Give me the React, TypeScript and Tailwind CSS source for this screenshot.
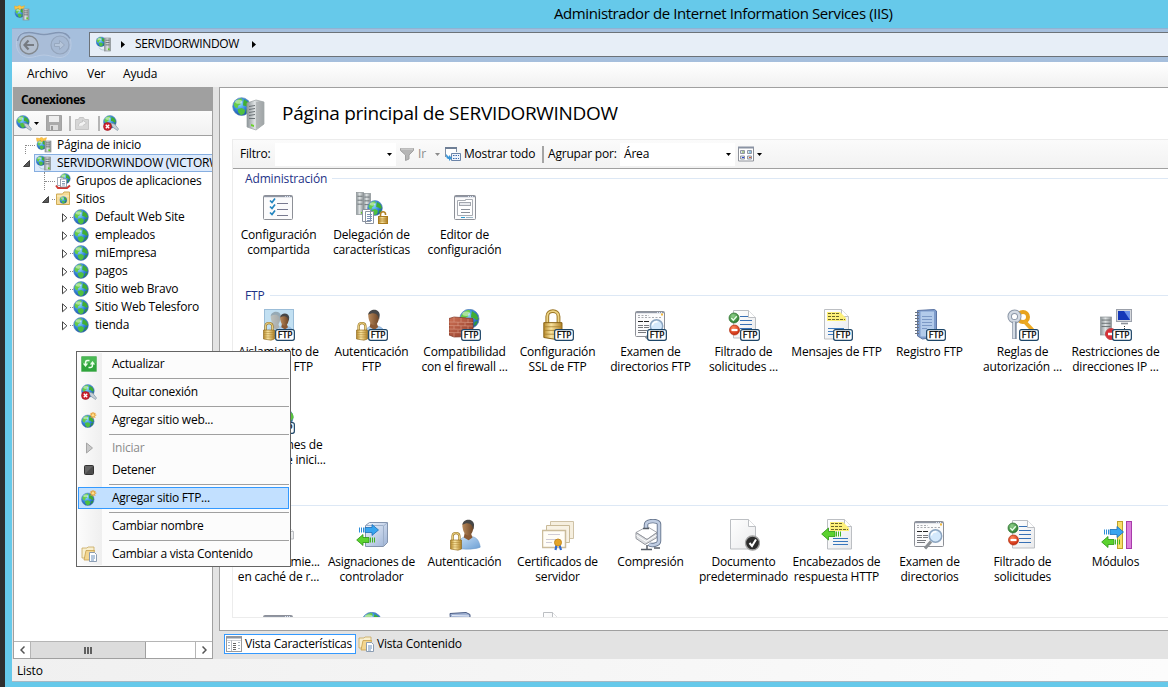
import type { ReactNode } from "react";

/* ---------- shared drawing parts ---------- */

function Defs() {
  return (
    <svg className="absolute h-0 w-0" aria-hidden="true">
      <defs>
        <radialGradient id="sea" cx="0.4" cy="0.35" r="0.7">
          <stop offset="0" stopColor="#8edcff" />
          <stop offset="0.55" stopColor="#3284dc" />
          <stop offset="1" stopColor="#1b4c9c" />
        </radialGradient>
        <linearGradient id="steel" x1="0" x2="1">
          <stop offset="0" stopColor="#8d9599" />
          <stop offset="0.45" stopColor="#dfe3e4" />
          <stop offset="1" stopColor="#8a9093" />
        </linearGradient>
        <linearGradient id="gold" x1="0" x2="1">
          <stop offset="0" stopColor="#b78a2a" />
          <stop offset="0.4" stopColor="#f9e4a0" />
          <stop offset="1" stopColor="#b08024" />
        </linearGradient>
        <linearGradient id="paper" x1="0" y1="0" x2="1" y2="1">
          <stop offset="0" stopColor="#ffffff" />
          <stop offset="1" stopColor="#e9eaec" />
        </linearGradient>
        <linearGradient id="blueBox" x1="0" y1="0" x2="1" y2="1">
          <stop offset="0" stopColor="#f0f5fd" />
          <stop offset="1" stopColor="#9db3d6" />
        </linearGradient>
        <linearGradient id="skin" x1="0" x2="1">
          <stop offset="0" stopColor="#b98a5c" />
          <stop offset="1" stopColor="#6d4526" />
        </linearGradient>
        <linearGradient id="shirt" x1="0" y1="0" x2="1" y2="1">
          <stop offset="0" stopColor="#c8e0f7" />
          <stop offset="1" stopColor="#6c9fd4" />
        </linearGradient>
        <linearGradient id="brick" x1="0" y1="0" x2="1" y2="1">
          <stop offset="0" stopColor="#cf7256" />
          <stop offset="1" stopColor="#8e3a28" />
        </linearGradient>
        <radialGradient id="okBall" cx="0.4" cy="0.3" r="0.7">
          <stop offset="0" stopColor="#8fd08a" />
          <stop offset="1" stopColor="#26792a" />
        </radialGradient>
        <radialGradient id="noBall" cx="0.4" cy="0.3" r="0.7">
          <stop offset="0" stopColor="#ff8a5c" />
          <stop offset="1" stopColor="#c8260c" />
        </radialGradient>
      </defs>
    </svg>
  );
}

function Svg({ size, children, className = "" }: { size: 16 | 32; children: ReactNode; className?: string }) {
  return (
    <svg viewBox={`0 0 ${size} ${size}`} width={size} height={size} className={`block shrink-0 ${className}`}>
      {children}
    </svg>
  );
}

/* Globe drawn on a 16 unit square, placed with x, y and scale s */
function Earth({ x = 0, y = 0, s = 1 }: { x?: number; y?: number; s?: number }) {
  return (
    <g transform={`translate(${x} ${y}) scale(${s})`}>
      <circle cx="8" cy="8" r="7.4" fill="url(#sea)" stroke="#5b86b8" strokeWidth="0.6" />
      <path d="M1.4 6.4C2.4 3 5.4 1.1 8.2 1.2L8.8 3 6.8 4.2 7.4 6 5.2 7 4.6 9.4 2.6 8.8z" fill="#67cc48" />
      <path d="M10 1.9l3.4 2.3 1.6 3.6-1.6 1.2-2-1.6-2.2-.4.2-2.4z" fill="#3fae34" />
      <path d="M4.6 10l3.6-.9 2.8 1.7-.8 3.200-2.600 1.200-2.300-2z" fill="#4fc040" />
      <path d="M12 10.4l2.400-.8-1 2.800-1.800 1z" fill="#2e9a3a" />
      <ellipse cx="5.6" cy="4" rx="3" ry="1.700" fill="#fff" opacity="0.45" />
    </g>
  );
}

function Tower({ x = 0, y = 0, w = 7, h = 11 }: { x?: number; y?: number; w?: number; h?: number }) {
  return (
    <g>
      <rect x={x} y={y} width={w} height={h} fill="url(#steel)" stroke="#8c9396" strokeWidth="0.7" />
      <path d={`M${x + 1} ${y + h * 0.17}h${w - 2}M${x + 1} ${y + h * 0.35}h${w - 2}M${x + 1} ${y + h * 0.53}h${w - 2}`} stroke="#656d71" strokeWidth="0.9" />
      <rect x={x + w - 2.6} y={y + h - 2.6} width="1.7" height="1.7" fill="#5fd01e" />
    </g>
  );
}

function Padlock({ x = 0, y = 0, s = 1 }: { x?: number; y?: number; s?: number }) {
  return (
    <g transform={`translate(${x} ${y}) scale(${s})`}>
      <path d="M2.6 9.5V5.2C2.6 1 9.4 1 9.4 5.2v4.3" fill="none" stroke="#9a7524" strokeWidth="2.3" />
      <path d="M2.6 9.5V5.2C2.6 1 9.4 1 9.4 5.2v4.3" fill="none" stroke="#ecd384" strokeWidth="1.1" />
      <path d="M.5 9h11v9L8 19.2.5 18z" fill="url(#gold)" stroke="#8a6315" strokeWidth="0.6" />
      <path d="M.8 11.5h10.5M.8 13.7h10.5M.8 16h10.5" stroke="#a88230" strokeWidth="0.5" />
    </g>
  );
}

function FtpTag() {
  return (
    <g>
      <rect x="12.65" y="20.65" width="18.7" height="10.7" rx="2" fill="#fff" stroke="#1d4567" strokeWidth="1.2" />
      <text x="14.800" y="29" fontSize="8" fontFamily='"DejaVu Sans", sans-serif' fill="#000" stroke="#000" strokeWidth="0.250" textLength="14.500" lengthAdjust="spacingAndGlyphs">
        FTP
      </text>
    </g>
  );
}

function Man({ x = 0, y = 0, s = 1 }: { x?: number; y?: number; s?: number }) {
  return (
    <g transform={`translate(${x} ${y}) scale(${s})`}>
      <path d="M1 30c0-7 3-11 8-12h6c6 1 8 5 9 11-3 2-19 3-23 1z" fill="url(#shirt)" stroke="#6c97c7" strokeWidth="0.5" />
      <path d="M8 14h6l2 5-4 3-5-3z" fill="#8a5a35" />
      <path d="M5.5 6C6 1 17 0 17 7c0 5-2 10-5.5 10S5.6 12 5.500 6z" fill="url(#skin)" />
      <path d="M5.600 6C6-.500 17-1.500 17.600 6l-.6 5-1.500-4C13 3.500 9 4 5.600 6z" fill="#474747" />
    </g>
  );
}

function Sheet({ x = 4, y = 1, w = 24, h = 30 }: { x?: number; y?: number; w?: number; h?: number }) {
  return (
    <g fill="url(#paper)" stroke="#bcbfc3">
      <path d={`M${x + 0.5} ${y + 0.5}h${w - 8}l7 7v${h - 8.5}h-${w - 1}z`} />
      <path d={`M${x + w - 7.5} ${y + 0.5}v7h7`} fill="#fff" />
    </g>
  );
}

function WindowFrame({ x = 1, y = 3, w = 30, h = 25 }: { x?: number; y?: number; w?: number; h?: number }) {
  return (
    <g>
      <rect x={x + 0.5} y={y + 0.5} width={w - 1} height={h - 1} rx="1" fill="#fbfbfc" stroke="#8d9097" />
      <path d={`M${x + 1} ${y + 1.5}h${w - 2}`} stroke="#8f96a3" strokeWidth="1.4" />
      <path d={`M${x + w - 8} ${y + 1.5}h6`} stroke="#dce5f5" strokeWidth="1" strokeDasharray="1 1" />
    </g>
  );
}

function Magnifier() {
  return (
    <g>
      <path d="M17 22.500l-6 7" stroke="#8b8f93" strokeWidth="3" />
      <circle cx="21.500" cy="17" r="6.200" fill="#d3e8fb" stroke="#8ba4bf" strokeWidth="1.500" />
      <path d="M17.500 16.500c0-3 3-4 5-3.500" stroke="#fff" strokeWidth="1.500" fill="none" />
    </g>
  );
}

function Arrows({ x = 0, y = 0 }: { x?: number; y?: number }) {
  return (
    <g transform={`translate(${x} ${y})`}>
      <path d="M9 3.500h7V.500L22.500 6 16 11.500v-3H9z" fill="#38a5ef" stroke="#1a6db8" strokeWidth="0.800" />
      <path d="M3.500 3.500v5M5.500 3.500v5M7.500 3.500v5" stroke="#2c8cd8" strokeWidth="1" />
      <path d="M13 13.500H7v-3L.700 16 7 21.500v-3h6z" fill="#5bd22f" stroke="#2c9414" strokeWidth="0.800" />
      <path d="M14.500 13.500v5M16.500 13.500v5M18.500 13.500v5" stroke="#43b51f" strokeWidth="1" />
    </g>
  );
}

/* ---------- 16px icons ---------- */

const ServerIcon = () => (
  <Svg size={16}>
    <Earth s={0.66} x={-0.3} y={0.5} />
    <Tower x={8.500} y={2} w={6} h={13} />
    <path d="M3 11.500c1 2 3 2.500 5 2.500" stroke="#b6cad5" fill="none" />
  </Svg>
);

const HomeIcon = () => (
  <Svg size={16}>
    <Earth s={0.660} x={0.5} y={2.500} />
    <path d="M.500 1l3 .5 2-1.300 2 1.500 3-1-1 3-2-.2-2 1.500-1-2-3.500 1.500z" fill="#ffc545" stroke="#e8a626" strokeWidth="0.500" />
    <Tower x={9} y={4} w={6} h={11} />
  </Svg>
);

const PlugIcon = ({ removed = false }: { removed?: boolean }) => (
  <Svg size={16}>
    <Earth s={0.860} />
    <path d="M7.500 8l4 1 4 5-1 1.500-5-3.500z" fill="#c7d0d7" stroke="#8195a5" strokeWidth="0.700" />
    {removed && (
      <g>
        <circle cx="4.500" cy="11.500" r="4" fill="#cf1f2c" stroke="#961420" strokeWidth="0.600" />
        <path d="M2.800 9.800l3.400 3.400M6.200 9.800l-3.400 3.400" stroke="#fff" strokeWidth="1.400" />
      </g>
    )}
  </Svg>
);

const GlobeIcon = () => (
  <Svg size={16}>
    <Earth />
  </Svg>
);

const NewSiteIcon = () => (
  <Svg size={16}>
    <Earth s={0.850} y={2.500} />
    <path d="M12 0v6.500M8.800 3.200h6.500M9.700 1l4.600 4.600M14.300 1L9.700 5.600" stroke="#e9a43a" strokeWidth="1.200" />
    <circle cx="12" cy="3.200" r="1.300" fill="#ffe08a" />
  </Svg>
);

const PoolsIcon = () => (
  <Svg size={16}>
    <Earth s={0.700} x={4.500} y={0} />
    <path d="M1 12.500l2 2.500h9l3-2.500" fill="none" stroke="#cf3a33" strokeWidth="2" />
    <path d="M2.500 4.500h6v8h-6z" fill="#fff" stroke="#8b98a8" strokeWidth="0.800" />
    <path d="M5.500 6h6v8h-6z" fill="#fff" stroke="#7d8b9b" strokeWidth="0.800" />
    <path d="M7 8.500h3M7 10.500h3M7 12h3" stroke="#7088a6" strokeWidth="0.800" />
  </Svg>
);

const SitesIcon = () => (
  <Svg size={16}>
    <path d="M.500 3h6l1.500-2h5.500v12.500H.500z" fill="#f5dc9a" stroke="#cfab55" />
    <path d="M1 5h12" stroke="#fdf0c4" />
    <Earth s={0.480} x={3.500} y={5.200} />
  </Svg>
);

const RefreshIcon = () => (
  <Svg size={16}>
    <rect x="0.500" y="0.500" width="15" height="15" rx="0.500" fill="#2fa53c" stroke="#6fbd77" />
    <path d="M1 1h14v6H1z" fill="#5bc763" opacity="0.600" />
    <path d="M8.500 4.500H6.500c-2 0-2 1-2 4.500" stroke="#eaffea" strokeWidth="1.500" fill="none" />
    <path d="M1.800 7.500h5.400L4.500 11z" fill="#eaffea" />
    <path d="M7.500 11.500h2c2 0 2-1 2-4.500" stroke="#eaffea" strokeWidth="1.500" fill="none" />
    <path d="M8.800 8.500h5.400L11.500 5z" fill="#eaffea" />
  </Svg>
);

const ContentIcon = () => (
  <Svg size={16}>
    <path d="M1 2h5l1-1h6v11H1z" fill="#f8efcf" stroke="#c7a75c" strokeWidth="0.800" />
    <path d="M3 14l2-9.500h8.500L11 14z" fill="#f3d690" stroke="#c7a04a" strokeWidth="0.800" />
    <path d="M8.500 6.500h5l2 2v7h-7z" fill="#fff" stroke="#7f93ac" strokeWidth="0.900" />
    <path d="M10 10h4M10 12h4M10 14h3" stroke="#5a83b4" strokeWidth="0.900" />
  </Svg>
);

const FeaturesIcon = () => (
  <Svg size={16}>
    <rect x="0.500" y="0.500" width="15" height="15" fill="#fff" stroke="#9a9a9a" />
    <path d="M0 1.500h16" stroke="#8f959f" strokeWidth="2" />
    <path d="M1 4.500h14" stroke="#cfd3d8" />
    <path d="M2 6.500h2M2 9.500h2M2 12.500h2M12 6.500h2M12 9.500h2M12 12.500h2" stroke="#a8b4bf" />
    <path d="M5.500 4v11" stroke="#b9bec5" />
    <path d="M7 7.500h3M7 9.500h3M7 11.500h3M7 13.500h3" stroke="#666" />
  </Svg>
);

/* ---------- 32px icons ---------- */

const SharedConfig = () => (
  <Svg size={32}>
    <WindowFrame x={0} />
    <path d="M7 8.500l2 2 3-4M7 14.500l2 2 3-4M7 20.500l2 2 3-4" fill="none" stroke="#2385bf" strokeWidth="1.700" />
    <path d="M14 11.500h11M14 17.500h11M14 23.500h11" stroke="#77798f" />
  </Svg>
);

const Delegation = () => (
  <Svg size={32}>
    <Tower x={0.500} y={0.500} w={7} h={22} />
    <Tower x={7.500} y={1.500} w={7} h={21} />
    <Earth x={11} y={8} s={1} />
    <path d="M6.500 17.500h8v12h-8zM9.500 19.500h8v12h-8z" fill="#fff" stroke="#8b93a0" />
    <path d="M11 22.500h5M11 24.500h5M11 26.500h5M11 28.500h5" stroke="#7d93b8" />
    <path d="M24.500 25v-2.500c0-3.500 5-3.500 5-.5v1" fill="none" stroke="#b38324" strokeWidth="1.600" />
    <rect x="22.500" y="24.500" width="9" height="7" fill="url(#gold)" stroke="#a97c1f" />
    <path d="M23 27h8M23 29h8" stroke="#a97c1f" strokeWidth="0.700" />
  </Svg>
);

const ConfigEditor = () => (
  <Svg size={32}>
    <WindowFrame x={5} w={22} />
    <path d="M8.500 8.500h8v-1h7v16h-15z" fill="#fff" stroke="#a8acb3" />
    <rect x="10.500" y="10.500" width="11" height="3" fill="#e8eaee" stroke="#a2a6ae" />
    <path d="M12 17.500h9M12 20.500h9" stroke="#8a8f98" />
    <path d="M12 25.500h4" stroke="#2b9bd1" />
    <path d="M17 25.500h7" stroke="#9db7c6" />
  </Svg>
);

const FtpIsolation = () => (
  <Svg size={32}>
    <rect x="1.500" y="0.500" width="29" height="26" fill="#c2e0f2" stroke="#9bbdd8" />
    <g opacity="0.350">
      <Man x={3} y={2} s={0.850} />
    </g>
    <Man x={13} y={4} s={0.750} />
    <Padlock x={0} y={12} />
    <FtpTag />
  </Svg>
);

const FtpAuth = () => (
  <Svg size={32}>
    <Man x={7} y={0} s={0.950} />
    <Padlock x={0} y={12} />
    <FtpTag />
  </Svg>
);

const Firewall = () => (
  <Svg size={32}>
    <Earth x={10} y={-0.5} s={1.300} />
    <path d="M0 9.500L5 8l19 1.500v18L5 28l-5-2z" fill="url(#brick)" stroke="#7d3323" strokeWidth="0.700" />
    <path d="M0 13l24 .5M0 16.500l24 .5M0 20l24 .5M0 23.500l24 .5M5 8v5M12 9v4M19 10v4M9 13v4M16 14v3M5 17v3M12 17v3M19 17v3M9 21v3M5 24v4" stroke="#dba08a" strokeWidth="0.600" fill="none" />
    <FtpTag />
  </Svg>
);

const FtpSsl = () => (
  <Svg size={32}>
    <Padlock x={1} y={-1.2} s={1.650} />
    <FtpTag />
  </Svg>
);

const BrowseDrawing = () => (
  <g>
    <WindowFrame x={0} y={2} w={30} h={26} />
    <path d="M3 6.500h11M3 8.500h23" stroke="#a9abb0" strokeDasharray="2 1.500" />
    <path d="M3 12.500h12" stroke="#222" strokeWidth="1.200" strokeDasharray="5 1" />
    <path d="M3 16.500h5M9 16.500h5M3 18.500h5M9 18.500h5M3 21.500h9M3 23.500h8" stroke="#77797e" />
    <rect x="26" y="4.500" width="2" height="2" fill="#f3b93d" />
    <Magnifier />
  </g>
);

const FtpBrowse = () => (
  <Svg size={32}>
    <BrowseDrawing />
    <FtpTag />
  </Svg>
);

const Browse = () => (
  <Svg size={32}>
    <BrowseDrawing />
  </Svg>
);

const FilterDrawing = () => (
  <g>
    <Sheet x={5} y={1} w={23} h={29} />
    <path d="M12 7.500h8M12 11.500h12M12 15.500h12M12 19.500h12M12 23.500h12" stroke="#3770b5" />
    <circle cx="6" cy="9" r="5" fill="url(#okBall)" stroke="#2a6f2d" strokeWidth="0.700" />
    <path d="M3.300 9l2 2.200 3.500-4" stroke="#e8ffe8" strokeWidth="1.400" fill="none" />
    <circle cx="6.500" cy="21" r="5" fill="url(#noBall)" stroke="#b0300f" strokeWidth="0.700" />
    <path d="M3.500 21h6" stroke="#fff" strokeWidth="2.200" />
  </g>
);

const FtpFilter = () => (
  <Svg size={32}>
    <FilterDrawing />
    <FtpTag />
  </Svg>
);

const Filter = () => (
  <Svg size={32}>
    <FilterDrawing />
  </Svg>
);

const YellowNote = ({ x }: { x: number }) => (
  <g>
    <path d={`M${x} 3h13l6 6v3h-19z`} fill="#fdf07a" />
    <path d={`M${x + 1} 4.500h12M${x + 1} 7.500h12M${x + 1} 10.500h17`} stroke="#6b652a" strokeDasharray="3 1" />
  </g>
);

const FtpMessages = () => (
  <Svg size={32}>
    <Sheet x={3} y={0} w={25} h={31} />
    <YellowNote x={6} />
    <path d="M7 19.500h16M7 22.500h5M7 25.500h5" stroke="#3f7cc0" />
    <FtpTag />
  </Svg>
);

const FtpLog = () => (
  <Svg size={32}>
    <path d="M3.500 1.500l17-1 2 1.500v26l-14 2-5-3z" fill="#7e9ccb" stroke="#5b74a3" />
    <path d="M6.500 2.500h13.500v25H6.500z" fill="#b3cbea" />
    <path d="M8 7.500h10M8 10.500h10M8 13.500h10M8 16.500h10M8 19.500h5" stroke="#7c99c6" />
    <path d="M1 3.500h4M1 6.500h4M1 9.500h4M1 12.500h4M1 15.500h4M1 18.500h4M1 21.500h4M1 24.500h4" stroke="#6b7380" />
    <FtpTag />
  </Svg>
);

const FtpRules = () => (
  <Svg size={32}>
    <circle cx="16" cy="8" r="5" fill="none" stroke="#e8a31e" strokeWidth="4" />
    <path d="M17 12l8.500 9" stroke="#eca922" strokeWidth="4" />
    <circle cx="7.500" cy="7.500" r="4.800" fill="#fff" stroke="#8d98a8" strokeWidth="4.500" />
    <circle cx="7.500" cy="7.500" r="4.800" fill="none" stroke="#d3dae3" strokeWidth="2.500" />
    <path d="M7.500 12.500v17.500" stroke="#8793a4" strokeWidth="4.500" />
    <path d="M7 12.500v17" stroke="#d5dce5" strokeWidth="2" />
    <FtpTag />
  </Svg>
);

const FtpIp = () => (
  <Svg size={32}>
    <Tower x={0.500} y={8} w={11} h={18} />
    <rect x="16.500" y="0.500" width="15" height="12" fill="#d5d8dd" stroke="#9ba0aa" />
    <rect x="18" y="2" width="12" height="9" fill="#1437b8" />
    <path d="M24 2h6v9z" fill="#6c92ea" />
    <path d="M21 14.500h7" stroke="#8a9099" strokeWidth="1.600" />
    <path d="M24.500 17v4" stroke="#333" strokeDasharray="1 1" />
    <circle cx="11" cy="25" r="5.500" fill="#d92f35" stroke="#c2454a" />
    <path d="M8 25h4" stroke="#fff" strokeWidth="2.500" />
    <FtpTag />
  </Svg>
);

const FtpSession = () => (
  <Svg size={32}>
    <Earth x={10} y={5} s={1.300} />
    <path d="M24 9c4 0 7 3 6.500 7L27 20z" fill="#59c23c" />
    <FtpTag />
  </Svg>
);

const OutputCache = () => (
  <Svg size={32}>
    <Sheet x={6} y={5} w={25} h={16} />
    <path d="M22 14l5-3v6z" fill="#40ac35" />
  </Svg>
);

const Handlers = () => (
  <Svg size={32}>
    <path d="M9.500 6.500l4-3h18v20l-4 4h-18z" fill="url(#blueBox)" stroke="#8494ae" />
    <path d="M27.500 27V7l4-3.500M9.500 6.500h18" fill="none" stroke="#9eb0ca" />
    <Arrows x={0} y={5} />
  </Svg>
);

const Auth = () => (
  <Svg size={32}>
    <Man x={8} y={0} s={0.970} />
    <Padlock x={1} y={12} />
  </Svg>
);

const Certificates = () => (
  <Svg size={32}>
    <path d="M8.500 2.500h23v17h-23z" fill="#f6efdf" stroke="#cfc2a6" />
    <path d="M4.500 6.500h23v17h-23z" fill="#f8f2e4" stroke="#c9ba98" />
    <path d="M.500 11.500h23v17h-23z" fill="#fffdf7" stroke="#cbbc9b" strokeWidth="1.500" />
    <path d="M6 15.500h12M4 20.500h12M4 23.500h6" stroke="#cfcbd6" />
    <path d="M14.500 26l-1 5M17.500 26l1.500 5" stroke="#316acf" strokeWidth="2.200" />
    <circle cx="16" cy="23.500" r="3.500" fill="#e4a428" stroke="#c38a22" />
  </Svg>
);

const Compression = () => (
  <Svg size={32}>
    <path d="M1 13.500l11-6 10 6-10 7z" fill="#fff" stroke="#a4a7ad" />
    <path d="M1 13.500v6l9 6 12-7v-5l-10 7z" fill="#dcdee1" stroke="#94979e" />
    <path d="M1.500 16.500l9.500 6 11-6.500" fill="none" stroke="#fff" />
    <path d="M11 9V6c0-5 13-5 13-1v17c0 4-8 5-10 3" fill="none" stroke="#66758d" strokeWidth="4.500" />
    <path d="M11 9V6c0-5 13-5 13-1v17c0 4-8 5-10 3" fill="none" stroke="#c0cde2" strokeWidth="2.700" />
    <path d="M8 9.500h6M6 30.500h11M19 29h6M12 26v4" stroke="#555c66" strokeWidth="1.500" />
  </Svg>
);

const DefaultDoc = () => (
  <Svg size={32}>
    <Sheet x={2} y={0} w={26} h={31} />
    <circle cx="24.500" cy="24" r="7" fill="#2c2c2c" stroke="#a0a0a0" strokeWidth="1.300" />
    <path d="M21.500 24l2.500 3 4-6.500" fill="none" stroke="#fff" strokeWidth="2" />
  </Svg>
);

const Headers = () => (
  <Svg size={32}>
    <Sheet x={6} y={0} w={25} h={31} />
    <YellowNote x={9} />
    <path d="M12 19.500h15M12 22.500h15M12 25.500h15" stroke="#3977bd" />
    <path d="M14 12.500H7.500V9L.700 15l6.800 6v-3.500H14z" fill="#5bd22f" stroke="#2c9414" strokeWidth="0.800" />
    <path d="M15.500 12.500v5M17.500 12.500v5M19.500 12.500v5" stroke="#43b51f" />
  </Svg>
);

const Modules = () => (
  <Svg size={32}>
    <rect x="17.500" y="2.500" width="5" height="27" fill="#f7df6a" stroke="#bfa22a" />
    <rect x="26.500" y="2.500" width="5" height="27" fill="#dc7fdc" stroke="#a83caa" />
    <Arrows x={1} y={7} />
  </Svg>
);

const MimeTypes = () => (
  <Svg size={32}>
    <WindowFrame x={0} y={3} />
  </Svg>
);

const PagesGlobe = () => (
  <Svg size={32}>
    <Earth x={5} y={-0.5} s={1.350} />
  </Svg>
);

const Log = () => (
  <Svg size={32}>
    <path d="M1 1.500l16-1 4 2v27H3z" fill="#a4b5d5" stroke="#4b5d85" />
    <path d="M3 3.500l17 .5" stroke="#e3eaf7" />
  </Svg>
);

const Errors = () => (
  <Svg size={32}>
    <Sheet x={1} y={0} w={17} h={31} />
  </Svg>
);

const ServerBig = () => (
  <Svg size={32} className="overflow-visible">
    <Earth x={0} y={-1} s={1.200} />
    <path d="M15 5l9-3 8 2v22l-8 6-9-3z" fill="url(#steel)" stroke="#9aa0a2" strokeWidth="0.700" />
    <path d="M24 4l8 0v22l-8 5z" fill="#a8adae" opacity="0.700" />
    <path d="M17 8.500l6-1M17 11.500l6-1M17 14.500l6-1M17 17.500l6-1M17 20.500l6 0" stroke="#6a7276" />
    <path d="M19 26l3 1v2l-3-1z" fill="#6bd52a" />
  </Svg>
);

/* ---------- small pieces ---------- */

const Caret = ({ className = "text-black" }: { className?: string }) => (
  <svg viewBox="0 0 5 3" width="5" height="3" className={`shrink-0 ${className}`}>
    <path d="M0 0h5L2.500 3z" fill="currentColor" />
  </svg>
);

const RightCaret = () => (
  <svg viewBox="0 0 4 7" width="4" height="7" className="shrink-0">
    <path d="M0 0v7l4-3.500z" />
  </svg>
);

const Opened = () => (
  <svg viewBox="0 0 7 7" width="7" height="7" className="shrink-0">
    <path d="M6.500 0.500v6h-6z" fill="#595959" stroke="#262626" strokeWidth="0.800" />
  </svg>
);

const Closed = () => (
  <svg viewBox="0 0 6 10" width="6" height="10" className="mt-0.5 shrink-0">
    <path d="M.500 .800v8L4.900 4.800z" fill="#fff" stroke="#444" />
  </svg>
);

const Dots = ({ className }: { className: string }) => <span className={`h-px shrink-0 border-t border-dotted border-[#8a8a8a] ${className}`} />;

type Feature = { label: string[]; icon: () => ReactNode };

const admin: Feature[] = [
  { label: ["Configuración", "compartida"], icon: SharedConfig },
  { label: ["Delegación de", "características"], icon: Delegation },
  { label: ["Editor de", "configuración"], icon: ConfigEditor },
];

const ftp: Feature[] = [
  { label: ["Aislamiento de", "usuarios FTP"], icon: FtpIsolation },
  { label: ["Autenticación", "FTP"], icon: FtpAuth },
  { label: ["Compatibilidad", "con el firewall ..."], icon: Firewall },
  { label: ["Configuración", "SSL de FTP"], icon: FtpSsl },
  { label: ["Examen de", "directorios FTP"], icon: FtpBrowse },
  { label: ["Filtrado de", "solicitudes ..."], icon: FtpFilter },
  { label: ["Mensajes de FTP"], icon: FtpMessages },
  { label: ["Registro FTP"], icon: FtpLog },
  { label: ["Reglas de", "autorización ..."], icon: FtpRules },
  { label: ["Restricciones de", "direcciones IP ..."], icon: FtpIp },
  { label: ["Restricciones de", "intentos de inici..."], icon: FtpSession },
];

const iis: Feature[] = [
  { label: ["Almacenamie...", "en caché de r..."], icon: OutputCache },
  { label: ["Asignaciones de", "controlador"], icon: Handlers },
  { label: ["Autenticación"], icon: Auth },
  { label: ["Certificados de", "servidor"], icon: Certificates },
  { label: ["Compresión"], icon: Compression },
  { label: ["Documento", "predeterminado"], icon: DefaultDoc },
  { label: ["Encabezados de", "respuesta HTTP"], icon: Headers },
  { label: ["Examen de", "directorios"], icon: Browse },
  { label: ["Filtrado de", "solicitudes"], icon: Filter },
  { label: ["Módulos"], icon: Modules },
  { label: [], icon: MimeTypes },
  { label: [], icon: PagesGlobe },
  { label: [], icon: Log },
  { label: [], icon: Errors },
];

function Group({ title, items }: { title: string; items: Feature[] }) {
  return (
    <section className="shrink-0">
      <div className="flex h-6 items-start gap-[5px] pl-3">
        <h2 className="text-[12px] leading-[22px] tracking-[-0.150px] text-[#1e3287]">{title}</h2>
        <span className="mt-[10px] h-px flex-1 bg-[#dde8f5]" />
      </div>
      <div className="-ml-px grid w-[930px] grid-cols-10">
        {items.map(({ label, icon: Icon }, i) => (
          <div key={i} className="flex h-[93px] flex-col items-center">
            <Icon />
            <div className="mt-[3px] text-center leading-[15px] tracking-[-0.180px] whitespace-nowrap">
              {label.map((line) => (
                <div key={line}>{line}</div>
              ))}
            </div>
          </div>
        ))}
      </div>
    </section>
  );
}

const sites = ["Default Web Site", "empleados", "miEmpresa", "pagos", "Sitio web Bravo", "Sitio Web Telesforo", "tienda"];

function Connections() {
  return (
    <aside className="flex w-[200px] shrink-0 flex-col overflow-hidden border border-[#a0a0a0] bg-white">
      <div className="flex h-[23px] shrink-0 items-center bg-[#a0a0a0] pl-[7px] text-[12px] font-bold tracking-[-0.500px]">Conexiones</div>
      <div className="flex h-[25px] shrink-0 items-center border-b border-[#a0a0a0] bg-gradient-to-b from-[#fbfbfb] to-[#f1f1f1] pl-[2px]">
        <PlugIcon />
        <span className="ml-[2px] flex">
          <Caret />
        </span>
        <svg viewBox="0 0 16 16" width="16" height="16" className="ml-[7px]">
          <path d="M.5.5h15v15H.5z" fill="#aaa" stroke="#a2a2a2" />
          <path d="M3 1h10v6H3z" fill="#eee" />
          <path d="M4 10h8v5H4z" fill="#ddd" />
          <path d="M5 11h2v4H5z" fill="#999" />
        </svg>
        <span className="ml-[7px] h-[15px] w-[2px] bg-[#b5b5b5]" />
        <svg viewBox="0 0 16 16" width="16" height="16" className="ml-[3px]">
          <path d="M1.500 4.500h3l1-2h4l1 2h4v10h-13z" fill="#d6d6d6" stroke="#c6c6c6" />
          <path d="M4.500 11c0-3 2-4 4-4V5l4 3-3.500 2.500" fill="#f3f3f3" stroke="#bbb" strokeWidth="0.700" />
        </svg>
        <span className="ml-[8px] h-[15px] w-[2px] bg-[#b5b5b5]" />
        <span className="ml-[3px]">
          <PlugIcon removed />
        </span>
      </div>
      <div className="flex-1 overflow-hidden tracking-[-0.200px] whitespace-nowrap">
        <div className="flex h-[18px] items-center pl-[11px]">
          <span className="mt-[9px] mr-[1px] h-[9px] w-[10px] border-t border-l border-dotted border-[#8a8a8a]" />
          <HomeIcon />
          <span className="ml-[5px]">Página de inicio</span>
        </div>
        <div className="flex h-[18px] items-center pl-[9px]">
          <Opened />
          <div className="ml-[4px] flex h-[18px] flex-1 items-center border border-r-0 border-[#86aee0] bg-[#dceafc] pl-px">
            <ServerIcon />
            <span className="ml-[5px] w-[155px] overflow-hidden tracking-[-0.230px]">SERVIDORWINDOW (VICTORW</span>
          </div>
        </div>
        <div className="flex h-[18px] items-center pl-[30px]">
          <span className="h-[18px] border-l border-dotted border-[#8a8a8a]" />
          <Dots className="w-[10px]" />
          <PoolsIcon />
          <span className="ml-[5px]">Grupos de aplicaciones</span>
        </div>
        <div className="flex h-[18px] items-center pl-[28px]">
          <Opened />
          <Dots className="mr-px ml-[3px] w-[3px]" />
          <SitesIcon />
          <span className="ml-[4px]">Sitios</span>
        </div>
        {sites.map((name) => (
          <div key={name} className="flex h-[18px] items-center pl-[48px]">
            <Closed />
            <Dots className="ml-[2px] w-[3px]" />
            <GlobeIcon />
            <span className="ml-[6px]">{name}</span>
          </div>
        ))}
      </div>
      <div className="flex h-[17px] shrink-0 border-t border-[#b5b5b5] bg-white">
        <span className="flex w-[17px] items-center justify-center border-r border-[#b5b5b5]">
          <svg viewBox="0 0 5 8" width="5" height="8">
            <path d="M4.500.500L1 4l3.500 3.500" fill="none" stroke="#555" strokeWidth="1.500" />
          </svg>
        </span>
        <span className="flex w-[115px] items-center justify-center gap-px border-r border-[#a0a0a0] bg-[#dcdcdc]">
          <span className="h-[7px] w-[2px] bg-[#606060]" />
          <span className="h-[7px] w-[2px] bg-[#606060]" />
          <span className="h-[7px] w-[2px] bg-[#606060]" />
        </span>
        <span className="flex-1" />
        <span className="flex w-[17px] items-center justify-center border-l border-[#b5b5b5]">
          <svg viewBox="0 0 5 8" width="5" height="8">
            <path d="M.500.500L4 4 .500 7.500" fill="none" stroke="#555" strokeWidth="1.500" />
          </svg>
        </span>
      </div>
    </aside>
  );
}

function MenuItem({ label, icon, active, disabled }: { label: string; icon?: ReactNode; active?: boolean; disabled?: boolean }) {
  return (
    <div className={`relative flex h-[22px] items-center border ${active ? "border-[#3399ff] bg-[#c2e0ff]" : "border-transparent"}`}>
      <span className="flex w-[33px] pl-[2px]">{icon}</span>
      <span className={disabled ? "text-[#8b8b8b]" : ""}>{label}</span>
    </div>
  );
}

const Divider = () => (
  <div className="flex h-[6px] items-center pl-[31px]">
    <span className="h-px flex-1 bg-[#a0a0a0]" />
  </div>
);

function ContextMenu() {
  return (
    <div className="absolute top-[351px] left-[76px] h-[216px] w-[215px] border border-[#646464] bg-[#fcfcfc] p-px tracking-[-0.250px] whitespace-nowrap">
      <span className="absolute top-px bottom-px left-px w-6 bg-gradient-to-r from-[#fcfcfc] to-[#efefef]" />
      <MenuItem label="Actualizar" icon={<RefreshIcon />} />
      <Divider />
      <MenuItem label="Quitar conexión" icon={<PlugIcon removed />} />
      <Divider />
      <MenuItem label="Agregar sitio web..." icon={<NewSiteIcon />} />
      <Divider />
      <MenuItem
        label="Iniciar"
        disabled
        icon={
          <Svg size={16}>
            <path d="M5.500 3v10l6-5z" fill="#c9c9c9" stroke="#a5a5a5" />
          </Svg>
        }
      />
      <MenuItem
        label="Detener"
        icon={
          <Svg size={16}>
            <rect x="3.500" y="3.500" width="9" height="9" rx="1" fill="#4c4c4c" stroke="#333" />
            <path d="M4 12V4h8z" fill="#777" opacity="0.600" />
          </Svg>
        }
      />
      <Divider />
      <MenuItem label="Agregar sitio FTP..." active icon={<NewSiteIcon />} />
      <Divider />
      <MenuItem label="Cambiar nombre" />
      <Divider />
      <MenuItem label="Cambiar a vista Contenido" icon={<ContentIcon />} />
    </div>
  );
}

function FeatureToolbar() {
  return (
    <div className="flex h-[29px] shrink-0 items-center border-b border-[#a0a0a0] bg-gradient-to-b from-[#fbfbfb] to-[#f2f2f2] tracking-[-0.200px] whitespace-nowrap">
      <span className="w-[42px] pl-[7px]">Filtro:</span>
      <span className="flex h-[23px] w-[121px] items-center justify-end bg-white pr-[4px]">
        <Caret />
      </span>
      <svg viewBox="0 0 14 14" width="14" height="14" className="ml-[4px]">
        <path d="M.500 1.500h13v2L9 8v4l-3.500 1.500V8L.500 3.500z" fill="#b5b5b5" stroke="#a0a0a0" />
        <path d="M1 2h12" stroke="#dadada" />
      </svg>
      <span className="ml-[4px] w-[17px] text-[#8b8b8b]">Ir</span>
      <Caret className="text-[#8b8b8b]" />
      <svg viewBox="0 0 16 16" width="16" height="16" className="ml-[5px]">
        <path d="M.500 11V1.500h11V6" fill="#fff" stroke="#8190a5" />
        <path d="M0 2h12" stroke="#6f7f96" strokeWidth="2" />
        <path d="M6.500 7.500h9v7h-9z" fill="#eef3fb" stroke="#6b84a8" />
        <path d="M8 9.500h6M8 12.500h6" stroke="#3d6cad" strokeDasharray="1.500 1" />
        <path d="M1 8c0 4 1 5 3 5v2l3-3-3-3v2" fill="#3995d8" />
      </svg>
      <span className="ml-[3px] w-[78px]">Mostrar todo</span>
      <span className="h-[17px] w-[2px] bg-[#a5a5a5]" />
      <span className="ml-[4px] w-[72px]">Agrupar por:</span>
      <span className="flex h-[23px] w-[115px] items-center bg-white pr-[4px] pl-[4px]">
        <span className="flex-1">Área</span>
        <Caret />
      </span>
      <svg viewBox="0 0 16 16" width="16" height="16" className="ml-[3px]">
        <path d="M.500 1.500h15v13.500H.500z" fill="#fff" stroke="#8d9199" />
        <path d="M0 1.500h16" stroke="#8a93a3" strokeWidth="2" />
        <path d="M2.500 4.500h4v3h-4zM9.500 4.500h4v3h-4zM2.500 10h4v3h-4zM9.500 10h4v3h-4z" fill="#dde6ec" stroke="#9095a3" />
        <path d="M4 6h2" stroke="#7aa630" />
        <path d="M11 6h2" stroke="#3aa3d8" />
        <path d="M4 11.500h2" stroke="#2b43d8" />
        <path d="M11 11.500h2" stroke="#e2602c" />
      </svg>
      <span className="ml-[3px] flex">
        <Caret />
      </span>
    </div>
  );
}

export default function App() {
  return (
    <div className='relative flex h-[687px] w-[1168px] overflow-hidden bg-[#2e2e2e] pl-[5px] font-["Open_Sans","Noto_Sans",sans-serif] text-[12px] tracking-[-0.150px] text-black'>
      <Defs />
      <div className="flex min-w-0 flex-1 flex-col bg-[#66c9ea] pb-[5px] pl-[7px]">
        <header className="flex h-[28px] shrink-0 items-center pb-[2px] pl-[2px]">
          <HomeIcon />
          <h1 className="ml-[524px] text-[15px] tracking-[-0.400px] whitespace-nowrap">Administrador de Internet Information Services (IIS)</h1>
        </header>

        <nav className="flex h-[34px] shrink-0 items-start border-t border-[#8fb3d4] bg-[#a6bfdd] pt-[2px] pl-[4px]">
          <svg viewBox="0 0 56 28" width="56" height="28" className="shrink-0">
            <path d="M13 1C2 1 .500 7 .500 13.500S5 26.500 13 26.500c6 0 9-2.500 15-2.500s9 2.500 16 2.500 11-6 11-13S52 1 43 1c-6 0-9 2-15 2S19 1 13 1z" fill="#a9bdd8" stroke="#b9cbe3" />
            <path d="M1.500 10c1-6 4-8.500 11.500-8.500 6 0 9 2 15 2s9-2 15-2c6 0 9 2 11 6" fill="none" stroke="#8296b4" strokeWidth="1.500" />
            <circle cx="13" cy="14" r="9" fill="#b3bfcf" stroke="#83898f" strokeWidth="1.400" />
            <path d="M18 14H9M12.500 9.500L8.500 14l4 4.500" fill="none" stroke="#767b82" strokeWidth="2.200" />
            <circle cx="44" cy="14" r="9" fill="#a6b9d3" stroke="#93a4bb" strokeWidth="1.200" />
            <path d="M38.500 12.500h5V9.500l5 4.500-5 4.500v-3h-5z" fill="#b5c5da" stroke="#97a8bf" />
          </svg>
          <div className="mt-[1px] ml-[17px] flex h-[25px] flex-1 items-center border border-r-0 border-[#6c7278] bg-[#e7eef7] pb-px pl-[6px]">
            <ServerIcon />
            <span className="ml-[9px] flex">
              <RightCaret />
            </span>
            <span className="mr-[12px] ml-[10px] w-[105px] tracking-[-0.380px]">SERVIDORWINDOW</span>
            <RightCaret />
          </div>
        </nav>

        <div className="flex h-[25px] shrink-0 items-center bg-gradient-to-b from-white to-[#f1f1f1] pb-px pl-[15px]">
          <span className="w-[60px]">Archivo</span>
          <span className="w-[36px]">Ver</span>
          <span>Ayuda</span>
        </div>

        <div className="flex h-[572px] shrink-0 gap-[6px] bg-[#e3e3e3] pl-[1px]">
          <Connections />
          <main className="flex min-w-0 flex-1 flex-col">
            <div className="flex h-[544px] shrink-0 flex-col border-y border-l border-[#a0a0a0] bg-white pl-[12px]">
              <div className="flex h-[51px] shrink-0 items-center">
                <ServerBig />
                <h2 className="mb-[2px] ml-[18px] text-[19px] leading-[26px] tracking-[-0.300px] whitespace-nowrap">Página principal de SERVIDORWINDOW</h2>
              </div>
              <div className="flex h-[479px] shrink-0 flex-col overflow-hidden border-y border-l border-[#ececec]">
                <FeatureToolbar />
                <div className="-mt-px flex flex-col">
                  <Group title="Administración" items={admin} />
                  <Group title="FTP" items={ftp} />
                  <Group title="IIS" items={iis} />
                </div>
              </div>
            </div>
            <div className="flex h-[28px] items-center pb-[2px] pl-[5px] tracking-[-0.220px] whitespace-nowrap">
              <span className="flex h-[20px] w-[132px] items-center gap-[3px] border border-[#3399ff] bg-white pl-[1px]">
                <FeaturesIcon />
                <span>Vista Características</span>
              </span>
              <span className="ml-[2px] flex items-center gap-[3px]">
                <ContentIcon />
                <span>Vista Contenido</span>
              </span>
            </div>
          </main>
        </div>

        <footer className="flex h-[23px] shrink-0 items-center border-b border-[#a5b8c4] bg-gradient-to-r from-[#f0f0f0] to-[#fcfcfc] pt-[2px] pl-[5px]">Listo</footer>
      </div>
      <ContextMenu />
    </div>
  );
}
